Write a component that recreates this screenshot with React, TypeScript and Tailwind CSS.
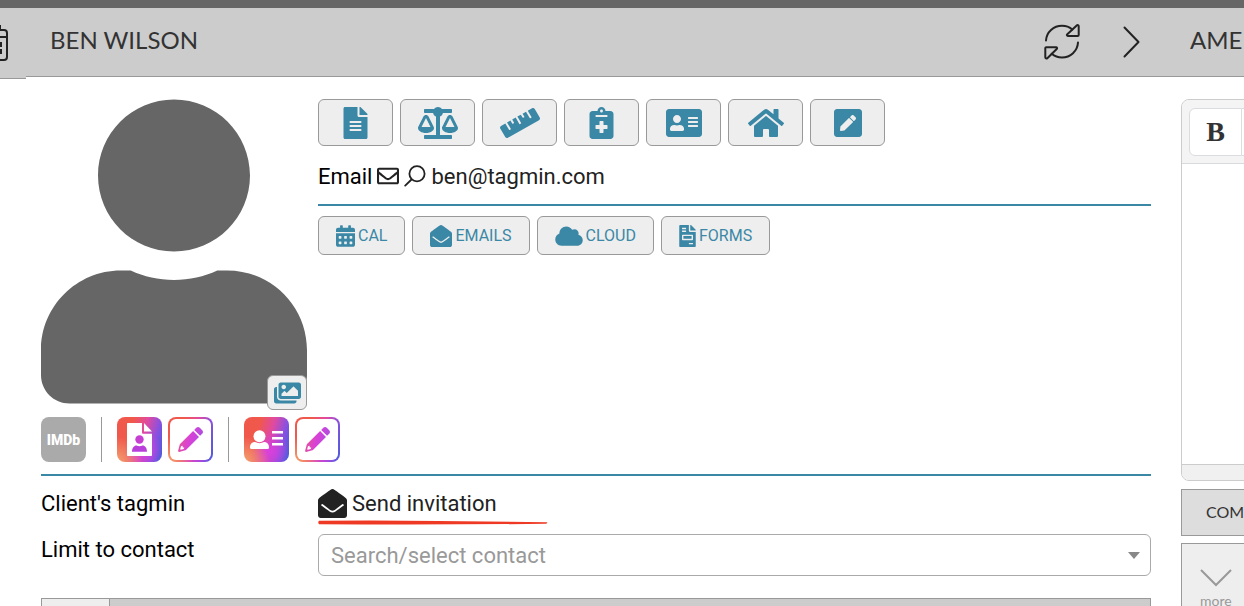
import type { ReactNode } from "react";
import {
  FaAddressCard,
  FaBalanceScale,
  FaCalendarAlt,
  FaCloud,
  FaEnvelopeOpen,
  FaFileAlt,
  FaFileInvoice,
  FaHome,
  FaImages,
  FaNotesMedical,
  FaPenSquare,
  FaRegEnvelope,
  FaRuler,
  FaUser,
} from "react-icons/fa";

const tools = [
  { label: "Notes", Icon: FaFileAlt, size: "w-[25px]" },
  { label: "Legal", Icon: FaBalanceScale, size: "w-10" },
  { label: "Measurements", Icon: FaRuler, size: "w-10" },
  { label: "Medical", Icon: FaNotesMedical, size: "w-[25px]" },
  { label: "Contact card", Icon: FaAddressCard, size: "w-9" },
  { label: "Home", Icon: FaHome, size: "w-9" },
  { label: "Edit", Icon: FaPenSquare, size: "w-7" },
];

const links = [
  { label: "CAL", Icon: FaCalendarAlt, size: "w-[19px]" },
  { label: "EMAILS", Icon: FaEnvelopeOpen, size: "w-[22px]" },
  { label: "CLOUD", Icon: FaCloud, size: "w-7" },
  { label: "FORMS", Icon: FaFileInvoice, size: "w-[17px]" },
];

function CalendarIcon() {
  return (
    <svg width="32" height="38" viewBox="0 0 32 38" fill="none" stroke="#222" strokeWidth="2" className="shrink-0">
      <rect x="1" y="6" width="30" height="30" rx="3" />
      <path d="M1 13h30M8 1v5M24 1v5" />
      <path d="M21 19h4v3h-4zM21 26h4v3h-4z" />
    </svg>
  );
}

function RefreshIcon() {
  return (
    <svg width="36" height="36" viewBox="0 0 36 36" fill="none" stroke="#222" strokeWidth="2" strokeLinecap="round" strokeLinejoin="round">
      <path d="M2 16.500C2.500 8 9.500 1.800 18 1.800c4 0 7.500 1.200 10.300 3.700" />
      <path d="M32.700 1.400 23.300 10.300c-.8.8-.3 1.700.6 1.700h9.800c.6 0 1-.4 1-1V2.200c0-1-1.200-1.500-2-.8z" />
      <path d="M34 18.500C33.500 27 26.500 33.500 18 33.500c-4 0-7.500-1.300-10.300-3.700" />
      <path d="M3.300 34.200 12.700 25c.8-.8.3-1.700-.6-1.700H2.300c-.6 0-1 .4-1 1v9c0 1 1.200 1.600 2 .9z" />
    </svg>
  );
}

function SearchIcon() {
  return (
    <svg width="22" height="22" viewBox="0 0 22 22" fill="none" stroke="#222" strokeWidth="1.800" strokeLinecap="round">
      <circle cx="13" cy="8.800" r="7.600" />
      <path d="M7.500 14.500 1.200 20.600" />
    </svg>
  );
}

function PencilIcon() {
  return (
    <svg width="25" height="25" viewBox="0 0 25 25" fill="url(#pencil)">
      <path d="M18.300.8c1-1 2.500-1 3.500 0l2.400 2.400c1 1 1 2.500 0 3.500L22.100 8.800 16.200 2.900z" />
      <path fillRule="evenodd" d="M15.100 4 21 9.900 8.200 22.700c-.3.300-.6.500-1 .6L1.200 24.900c-.7.200-1.300-.4-1.100-1.100l1.600-6c.1-.4.300-.7.600-1zM3 19.300 2.200 22.300l.5.500 3-.8.600-1.500-1.600-.1-.1-1.700z" />
    </svg>
  );
}

function FileUserIcon() {
  return (
    <svg width="25" height="33" viewBox="0 0 25 33" fill="#fff">
      <path d="M1 0h14v9.500c0 .8.5 1.300 1.300 1.300H25V32c0 .6-.4 1-1 1H1c-.6 0-1-.4-1-1V1c0-.6.4-1 1-1z" />
      <path d="M17 0l8 8.500h-8z" />
      <circle cx="12.500" cy="16.500" r="4.200" fill="#c63fd2" />
      <path d="M5 28.800c0-4 2-6.300 4.500-6.300 2 .9 4 .9 6 0 2.500 0 4.500 2.300 4.500 6.300z" fill="#b93fda" />
    </svg>
  );
}

function UserLinesIcon() {
  return (
    <svg width="34" height="20" viewBox="0 0 34 20" fill="#fff">
      <circle cx="9.500" cy="6.300" r="6" />
      <path d="M0 17.500c0-3.300 2-5.500 5-5.500 3 1.500 6 1.500 9 0 3 0 5 2.200 5 5.500 0 .9-.5 1.500-1.500 1.500h-16C.5 19 0 18.400 0 17.500z" />
      <path d="M22 1h11v2.500H22zM22 7h11v2.500H22zM22 13h11v2.500H22z" />
    </svg>
  );
}

function GradientTile({ label, children }: { label: string; children: ReactNode }) {
  return (
    <button
      aria-label={label}
      className="flex size-[45px] items-center justify-center rounded-lg bg-[radial-gradient(circle_at_0%_100%,#f3a070_0%,transparent_40%),radial-gradient(circle_at_58%_75%,#d93fe0_0%,transparent_45%),linear-gradient(105deg,#f0584c_30%,#e04aa0_55%,#8a50e0_78%,#3a5fdc_100%)]"
    >
      {children}
    </button>
  );
}

function EditTile({ label }: { label: string }) {
  return (
    <GradientTile label={label}>
      <span className="flex size-[41px] items-center justify-center rounded-md bg-white">
        <PencilIcon />
      </span>
    </GradientTile>
  );
}

function ClientPanel() {
  return (
    <main className="min-w-0 flex-1">
      <header className="flex h-[69px] items-center justify-between border-b border-[#999] bg-[#ccc] pr-[26px] pl-6">
        <h1 className="pb-1 font-[Lato,sans-serif] text-2xl text-[#333]">BEN WILSON</h1>
        <div className="flex items-center gap-[43px]">
          <button aria-label="Refresh"><RefreshIcon /></button>
          <button aria-label="Next">
            <svg width="17" height="32" viewBox="0 0 17 32" fill="none" stroke="#222" strokeWidth="2" strokeLinecap="round" strokeLinejoin="round">
              <path d="M1.500 1.500 15.500 16 1.500 30.500" />
            </svg>
          </button>
        </div>
      </header>

      <div className="px-[15px] pt-[22px]">
        <div className="grid grid-cols-[266px_1fr] gap-x-[11px]">
          <div className="relative h-[305px]">
            <FaUser className="h-full w-full text-[#666]" />
            <button
              aria-label="Photos"
              className="absolute right-0 -bottom-1.5 flex h-[35px] w-10 items-center justify-center rounded-md border border-[#999] bg-[#eee] text-[#3b88a6]"
            >
              <FaImages className="h-6 w-[27px]" />
            </button>
          </div>

          <div>
            <div className="flex gap-[7px]">
              {tools.map(({ label, Icon, size }) => (
                <button
                  key={label}
                  aria-label={label}
                  className="flex h-[47px] w-[75px] items-center justify-center rounded-md border border-[#999] bg-[#eee] text-[#3b88a6]"
                >
                  <Icon className={`h-8 ${size}`} />
                </button>
              ))}
            </div>
            <div className="flex h-[60px] items-center border-b-2 border-[#3b88a6] pt-0.5 text-[22px] text-[#222]">
              <span className="mr-[5px] text-black">Email</span>
              <FaRegEnvelope className="mr-[5px] size-[22px]" />
              <SearchIcon />
              <a href="mailto:ben@tagmin.com" className="ml-[5px]">ben@tagmin.com</a>
            </div>
            <div className="mt-2.5 flex gap-[7px]">
              {links.map(({ label, Icon, size }) => (
                <button
                  key={label}
                  className="flex h-[39px] items-center gap-[3px] rounded-md border border-[#999] bg-[#eee] px-[17px] text-base text-[#3b88a6]"
                >
                  <Icon className={`h-[22px] ${size}`} />
                  {label}
                </button>
              ))}
            </div>
          </div>
        </div>

        <div className="mt-[13px] flex items-center gap-1.5 border-b-2 border-[#3b88a6] pb-3">
          <button aria-label="IMDb profile" className="size-[45px] rounded-lg bg-[#aaa] text-sm font-black text-white">
            IMDb
          </button>
          <span className="mx-[9px] h-[45px] w-px bg-[#999]" />
          <GradientTile label="Resume"><FileUserIcon /></GradientTile>
          <EditTile label="Edit resume" />
          <span className="mx-[9px] h-[45px] w-px bg-[#999]" />
          <GradientTile label="Profile card"><UserLinesIcon /></GradientTile>
          <EditTile label="Edit profile card" />
        </div>

        <div className="grid grid-cols-[266px_1fr] gap-x-[11px] text-[22px] text-black">
          <span className="flex h-[54px] items-center">Client&#39;s tagmin</span>
          <div className="flex h-[54px] items-center">
            <a href="#invite" className="relative flex items-center gap-[5px] text-[#222]">
              <FaEnvelopeOpen className="size-[29px]" />
              Send invitation
              <svg width="230" height="6" viewBox="0 0 230 6" className="absolute -bottom-1.5 left-0" aria-hidden>
                <path d="M1 .8Q60 .2 120 1L229 2.200Q230 3 228 3.800Q110 5 1 4.200Q-.5 2.500 1 .8z" fill="#ee3a24" />
              </svg>
            </a>
          </div>
          <label htmlFor="contact" className="pt-[3px]">Limit to contact</label>
          <div className="relative pt-1">
            <select id="contact" className="h-[42px] w-full appearance-none rounded-md border border-[#aaa] bg-white px-3 text-[#999]">
              <option>Search/select contact</option>
            </select>
            <svg width="12" height="7" viewBox="0 0 12 7" className="pointer-events-none absolute right-[11px] bottom-[17px]">
              <path d="M0 0h12L6 7z" fill="#888" />
            </svg>
          </div>
        </div>

        <div className="mt-[22px] flex h-12 border border-[#999] bg-[#ccc]">
          <div className="w-[68px] border-r border-[#999] bg-[#eee]" />
        </div>
      </div>
    </main>
  );
}

function NotesPanel() {
  return (
    <aside className="w-[78px] shrink-0 overflow-hidden font-[Lato,sans-serif]">
      <header className="flex h-[69px] items-center border-b border-[#999] bg-[#ccc] pl-6">
        <h2 className="pb-1 text-2xl whitespace-nowrap text-[#333]">AMERICA</h2>
      </header>
      <div className="w-[320px] pt-[22px] pl-[15px]">
        <div className="overflow-hidden rounded-lg border border-[#ccc]">
          <div className="flex h-16 items-center border-b border-[#d8dadd] bg-[#f4f4f4] pl-[7px]">
            <button className="h-12 w-[53px] rounded-l-md border border-[#dadce0] bg-white font-['Liberation_Serif',serif] text-[28px] font-bold text-[#333]">B</button>
            <span className="h-12 w-[53px] border-y border-r border-[#dadce0] bg-white" />
          </div>
          <div className="h-[300px] bg-white" />
          <div className="h-4 border-t border-[#ccc] bg-[#f0f0f0]" />
        </div>
        <button className="mt-2 flex h-[47px] w-full items-center border border-[#999] bg-[#ddd] pb-0.5 pl-6 text-base text-[#333]">
          COMMENTS
        </button>
        <button className="mt-[7px] flex h-[90px] w-[90px] flex-col items-start border border-[#999] bg-[#eee] pt-[25px] pl-[18px] text-sm text-[#999]">
          <svg width="32" height="18" viewBox="0 0 32 18" fill="none" stroke="#999" strokeWidth="2">
            <path d="M1 1l15 15L31 1" />
          </svg>
          <span className="pt-1">more</span>
        </button>
      </div>
    </aside>
  );
}

export default function App() {
  return (
    <div className="h-screen overflow-hidden bg-white font-[Roboto,sans-serif]">
      <svg width="0" height="0" className="absolute" aria-hidden>
        <linearGradient id="pencil" gradientUnits="userSpaceOnUse" x1="0" y1="8" x2="25" y2="14">
          <stop offset="0%" stopColor="#e85590" />
          <stop offset="50%" stopColor="#d740d8" />
          <stop offset="100%" stopColor="#a84fe0" />
        </linearGradient>
      </svg>
      <div className="h-2 bg-[#666]" />
      <div className="flex items-start">
        <div className="flex h-[71px] w-[26px] shrink-0 items-center justify-end overflow-hidden border-b border-[#999] bg-[#ccc] pr-[18px]">
          <CalendarIcon />
        </div>
        <ClientPanel />
        <NotesPanel />
      </div>
    </div>
  );
}
